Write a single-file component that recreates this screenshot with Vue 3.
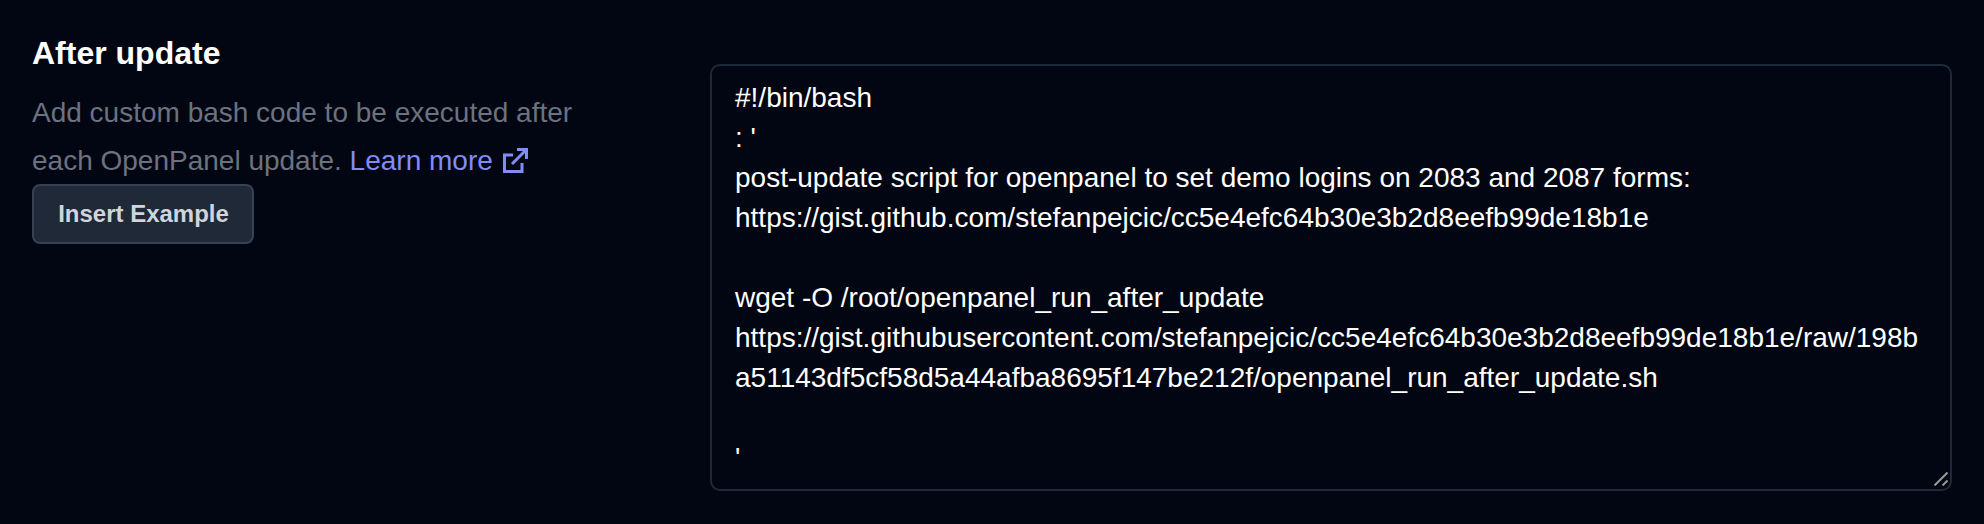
<template>
  <div class="section">
    <div class="intro">
      <h3 class="title">After update</h3>
      <p class="desc">
        Add custom bash code to be executed after each OpenPanel update.
        <a class="link" href="#" @click.prevent>Learn more
          <svg class="ext" viewBox="0 0 25 25" fill="none" stroke="currentColor" stroke-width="3">
            <path d="M10 7H1.5V23.5H19V15" />
            <path d="M9 16L23 2" />
            <path d="M14 1.5H23.5V11" />
          </svg>
        </a>
      </p>
      <button type="button" class="example" @click="script = sample">Insert Example</button>
    </div>
    <div class="editor-wrap">
      <textarea v-model="script" class="editor" spellcheck="false"></textarea>
      <svg class="grip" viewBox="0 0 14 14" stroke="#9a9a9a" stroke-width="2">
        <path d="M0.5 13.5L13.5 0.5" />
        <path d="M8.5 13.5L13.5 8.5" />
      </svg>
    </div>
  </div>
</template>

<script setup>
import { ref } from 'vue';

const sample = `#!/bin/bash
: '
post-update script for openpanel to set demo logins on 2083 and 2087 forms:
https://gist.github.com/stefanpejcic/cc5e4efc64b30e3b2d8eefb99de18b1e

wget -O /root/openpanel_run_after_update
https://gist.githubusercontent.com/stefanpejcic/cc5e4efc64b30e3b2d8eefb99de18b1e/raw/198ba51143df5cf58d5a44afba8695f147be212f/openpanel_run_after_update.sh

'
`;

const script = ref(sample);
</script>

<style scoped>
.section {
  display: grid;
  grid-template-columns: 626px 1fr;
  gap: 52px;
  padding: 33px 32px 33px 32px;
}

.title {
  margin: 0 0 16px;
  font-size: 32px;
  line-height: 40px;
  font-weight: 700;
  color: #fff;
}

.desc {
  margin: 0;
  width: 560px;
  font-size: 28px;
  line-height: 48px;
  color: #6b7280;
}

.link {
  color: #818cf8;
  text-decoration: none;
}

.ext {
  width: 25px;
  height: 25px;
  margin-left: 2px;
  vertical-align: -3px;
}

.example {
  display: block;
  height: 60px;
  width: 222px;
  margin-top: -1px;
  padding: 0 0 0 1px;
  border: 2px solid #374151;
  border-radius: 8px;
  background: #1f2937;
  color: #d1d5db;
  font: 700 24px "Liberation Sans", Arial, sans-serif;
}

.editor-wrap {
  position: relative;
  margin-top: 31px;
  height: 427px;
}

.editor {
  display: block;
  height: 100%;
  box-sizing: border-box;
  width: 100%;
  padding: 12px 23px;
  border: 2px solid #1f2937;
  border-radius: 10px;
  background: transparent;
  color: #fff;
  font: 28px/40px "Liberation Sans", Arial, sans-serif;
  outline: none;
  resize: none;
}

.grip {
  position: absolute;
  right: 4px;
  bottom: 5px;
  width: 14px;
  height: 14px;
  pointer-events: none;
}
</style>

<style>
html, body {
  margin: 0;
  background: #020612;
  font-family: "Liberation Sans", Arial, sans-serif;
}
</style>
